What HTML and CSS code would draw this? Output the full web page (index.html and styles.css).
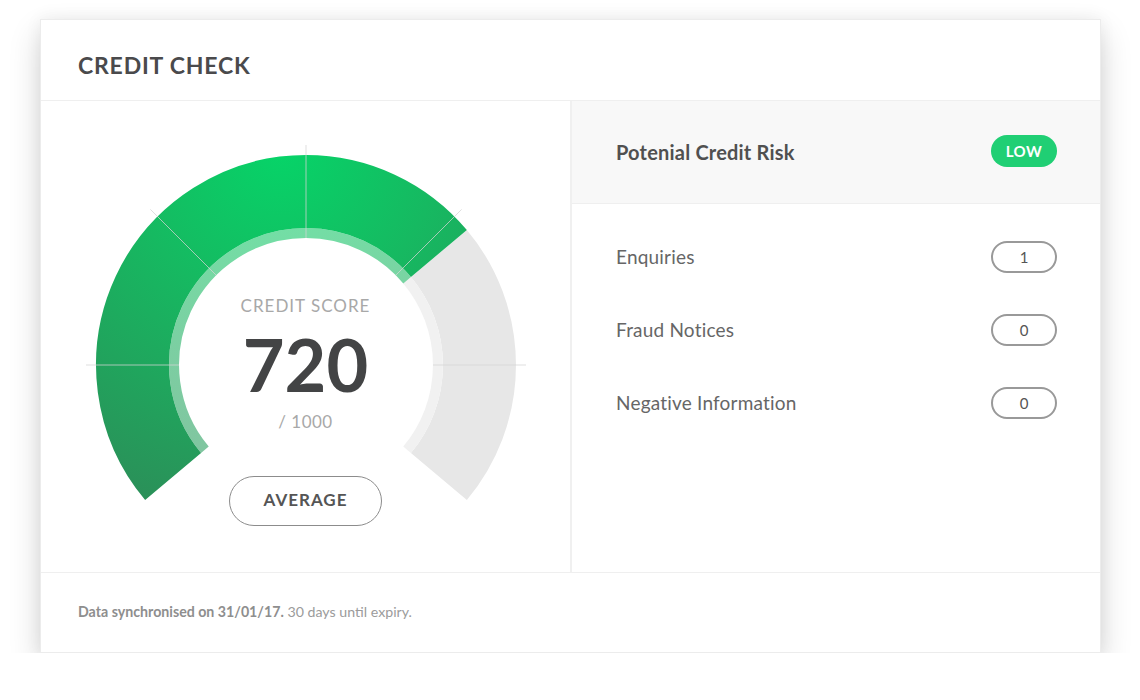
FILE: index.html
```html
<!DOCTYPE html>
<html lang="en">
<head>
<meta charset="utf-8">
<title>Credit Check</title>
<link rel="stylesheet" href="styles.css">
</head>
<body>
<div class="card">
  <header class="card-header">
    <h1 class="title">CREDIT CHECK</h1>
  </header>
  <div class="card-main">
    <section class="score-col">
      <div class="gauge">
        <svg class="gauge-svg" width="460" height="370" viewBox="0 0 460 370">
          <defs>
            <radialGradient id="g" gradientUnits="userSpaceOnUse" cx="205" cy="15" r="370">
              <stop offset="0" stop-color="#06d468"/>
              <stop offset="0.42" stop-color="#16b961"/>
              <stop offset="1" stop-color="#2a9159"/>
            </radialGradient>
          </defs>
          <path d="M362.9 118.5 A173.5 173.5 0 0 1 362.9 341.5" fill="none" stroke="#e7e7e7" stroke-width="73"/>
          <path d="M331.1 145.2 A132 132 0 0 1 331.1 314.8" fill="none" stroke="#f1f1f1" stroke-width="10"/>
          <path d="M97.1 341.5 A173.5 173.5 0 0 1 230 56.5 A173.5 173.5 0 0 1 362.9 118.5" fill="none" stroke="url(#g)" stroke-width="73"/>
          <path d="M128.9 314.8 A132 132 0 0 1 230 98 A132 132 0 0 1 331.1 145.2" fill="none" stroke="url(#g)" stroke-opacity="0.58" stroke-width="10"/>
          <g stroke="#d4d4d4" stroke-opacity="0.75" stroke-width="1">
            <line x1="103" y1="230" x2="10" y2="230"/>
            <line x1="140.2" y1="140.2" x2="74.4" y2="74.4"/>
            <line x1="230" y1="103" x2="230" y2="10"/>
            <line x1="319.8" y1="140.2" x2="385.6" y2="74.4"/>
            <line x1="357" y1="230" x2="450" y2="230"/>
          </g>
        </svg>
        <div class="readout">
          <div class="score-label">CREDIT SCORE</div>
          <div class="score-value">720</div>
          <div class="score-max">/ 1000</div>
          <div class="rating">AVERAGE</div>
        </div>
      </div>
    </section>
    <section class="risk-col">
      <div class="risk-head">
        <span class="risk-title">Potenial Credit Risk</span>
        <span class="badge-low">LOW</span>
      </div>
      <ul class="risk-list">
        <li class="risk-row"><span class="risk-label">Enquiries</span><span class="count">1</span></li>
        <li class="risk-row"><span class="risk-label">Fraud Notices</span><span class="count">0</span></li>
        <li class="risk-row"><span class="risk-label">Negative Information</span><span class="count">0</span></li>
      </ul>
    </section>
  </div>
  <footer class="card-footer">
    <p class="sync"><strong class="sync-strong">Data synchronised on 31/01/17.</strong> 30 days until expiry.</p>
  </footer>
</div>
</body>
</html>
```

FILE: styles.css
```css
* { box-sizing: border-box; }

html, body {
  margin: 0;
  padding: 0;
  background: #ffffff;
}

body {
  font-family: "Lato", "Open Sans", sans-serif;
  color: #4a4a4a;
  padding: 19px 0 0 40px;
}

.card {
  width: 1061px;
  background: #ffffff;
  border: 1px solid #ececec;
  box-shadow: 0 14px 30px rgba(0, 0, 0, 0.16), 0 0 16px rgba(0, 0, 0, 0.06);
}

.card-header {
  height: 81px;
  border-bottom: 1px solid #efefef;
  padding: 9px 0 0 37px;
  display: flex;
  align-items: center;
}

.title {
  margin: 0;
  font-size: 23px;
  font-weight: 700;
  letter-spacing: 0.8px;
  color: #4a4a4c;
  line-height: 24px;
}

.card-main {
  display: flex;
  border-bottom: 1px solid #efefef;
}

.score-col {
  width: 531px;
  border-right: 2px solid #f0f0f0;
  padding: 34px 0 46px 0;
  display: flex;
  justify-content: center;
}

.gauge {
  width: 460px;
  display: grid;
}

.gauge-svg {
  grid-area: 1 / 1;
  display: block;
}

.readout {
  grid-area: 1 / 1;
  display: flex;
  flex-direction: column;
  align-items: center;
  padding-top: 161px;
}

.score-label {
  font-size: 17px;
  line-height: 20px;
  letter-spacing: 1px;
  color: #a8a8a8;
}

.score-value {
  margin-top: 12px;
  font-size: 72px;
  line-height: 72px;
  font-weight: 700;
  color: #434445;
}

.score-max {
  margin-top: 12px;
  font-size: 17px;
  line-height: 20px;
  letter-spacing: 0.5px;
  color: #a8a8a8;
}

.rating {
  margin-top: 44px;
  width: 153px;
  height: 50px;
  border: 1.5px solid #8c8c8c;
  border-radius: 25px;
  padding-bottom: 3px;
  display: flex;
  align-items: center;
  justify-content: center;
  font-size: 17px;
  font-weight: 700;
  letter-spacing: 1px;
  color: #555;
}

.risk-col {
  flex: 1;
  display: flex;
  flex-direction: column;
}

.risk-head {
  height: 103px;
  background: #f8f8f8;
  border-bottom: 1px solid #efefef;
  display: flex;
  align-items: center;
  justify-content: space-between;
  padding: 0 43px 0 44px;
}

.risk-title {
  font-size: 20px;
  font-weight: 700;
  color: #505050;
  letter-spacing: 0.2px;
}

.badge-low {
  width: 66px;
  height: 32px;
  border-radius: 16px;
  background: #20cf74;
  color: #ffffff;
  font-size: 15px;
  font-weight: 700;
  letter-spacing: 0.5px;
  display: flex;
  align-items: center;
  justify-content: center;
  margin-top: -2px;
}

.risk-list {
  list-style: none;
  margin: 0;
  padding: 16px 43px 0 44px;
}

.risk-row {
  height: 73px;
  display: flex;
  align-items: center;
  justify-content: space-between;
}

.risk-label {
  font-size: 19px;
  color: #666666;
  letter-spacing: 0.2px;
}

.count {
  width: 66px;
  height: 32px;
  border: 2px solid #999999;
  border-radius: 16px;
  display: flex;
  align-items: center;
  justify-content: center;
  font-size: 15px;
  color: #555;
}

.card-footer {
  height: 79px;
  display: flex;
  align-items: center;
  padding: 0 0 2px 37px;
}

.sync {
  margin: 0;
  font-size: 14.2px;
  color: #9b9b9b;
}

.sync-strong {
  font-weight: 700;
  color: #8e8e8e;
}
```
